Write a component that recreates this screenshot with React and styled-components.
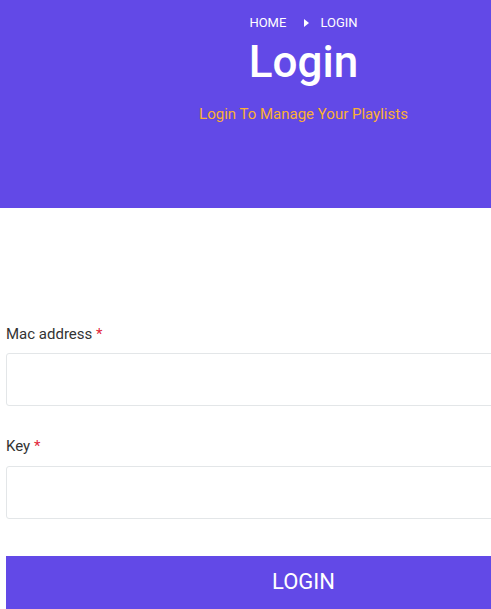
import styled, { createGlobalStyle } from 'styled-components';
import { useState } from 'react';

const GlobalStyle = createGlobalStyle`
	body {
		margin: 0;
		font-family: Roboto, 'Liberation Sans', sans-serif;
		background: #ffffff;
	}
`;

const Page = styled.div`
	width: 607px;
`;

const Banner = styled.header`
	height: 208px;
	box-sizing: border-box;
	padding-top: 13px;
	background-color: #6249e7;
	display: flex;
	flex-direction: column;
	align-items: center;
	text-align: center;
`;

const Crumbs = styled.ul`
	display: flex;
	align-items: center;
	list-style: none;
	margin: 0;
	padding: 0;
	font-size: 13px;
	line-height: 20px;
	color: #ffffff;
	text-transform: uppercase;
`;

const Crumb = styled.li`
	display: flex;
	align-items: center;
`;

const Arrow = styled.span`
	width: 0;
	height: 0;
	margin: 0 11px 0 18px;
	border-top: 4px solid transparent;
	border-bottom: 4px solid transparent;
	border-left: 5px solid #ffffff;
`;

const Title = styled.h1`
	margin: 3px 0 0;
	font-size: 44px;
	font-weight: 500;
	line-height: 52px;
	color: #ffffff;
`;

const Subtitle = styled.p`
	margin: 16px 0 0;
	font-size: 15px;
	line-height: 20px;
	color: #fbb034;
`;

const Form = styled.form`
	padding: 116px 6px 0;
	display: flex;
	flex-direction: column;
`;

const Field = styled.div`
	display: flex;
	flex-direction: column;
	margin-bottom: ${(p) => p.$gap || '30px'};
`;

const Label = styled.label`
	font-size: 15px;
	line-height: 20px;
	color: #333333;
	margin-bottom: ${(p) => p.$space || '9px'};

	span {
		color: #e2263a;
	}
`;

const Input = styled.input`
	height: 53px;
	box-sizing: border-box;
	border: 1px solid #e3e6e8;
	border-radius: 3px;
	padding: 0 14px;
	font-size: 15px;
	font-family: inherit;
	outline: none;
`;

const Button = styled.button`
	height: 54px;
	padding: 0 0 4px;
	border: none;
	background-color: #6249e7;
	color: #ffffff;
	font-family: inherit;
	font-size: 22px;
	text-transform: uppercase;
	cursor: pointer;
`;

const App = () => {
	const [mac, setMac] = useState('');
	const [key, setKey] = useState('');

	const handleSubmit = (e) => {
		e.preventDefault();
	};

	return (
		<Page>
			<GlobalStyle />
			<Banner>
				<Crumbs>
					<Crumb>Home</Crumb>
					<Crumb>
						<Arrow />
						Login
					</Crumb>
				</Crumbs>
				<Title>Login</Title>
				<Subtitle>Login To Manage Your Playlists</Subtitle>
			</Banner>
			<Form onSubmit={handleSubmit}>
				<Field>
					<Label htmlFor="mac">
						Mac address <span>*</span>
					</Label>
					<Input id="mac" value={mac} onChange={(e) => setMac(e.target.value)} />
				</Field>
				<Field $gap="37px">
					<Label htmlFor="key" $space="10px">
						Key <span>*</span>
					</Label>
					<Input id="key" value={key} onChange={(e) => setKey(e.target.value)} />
				</Field>
				<Button type="submit">Login</Button>
			</Form>
		</Page>
	);
};

export default App;
